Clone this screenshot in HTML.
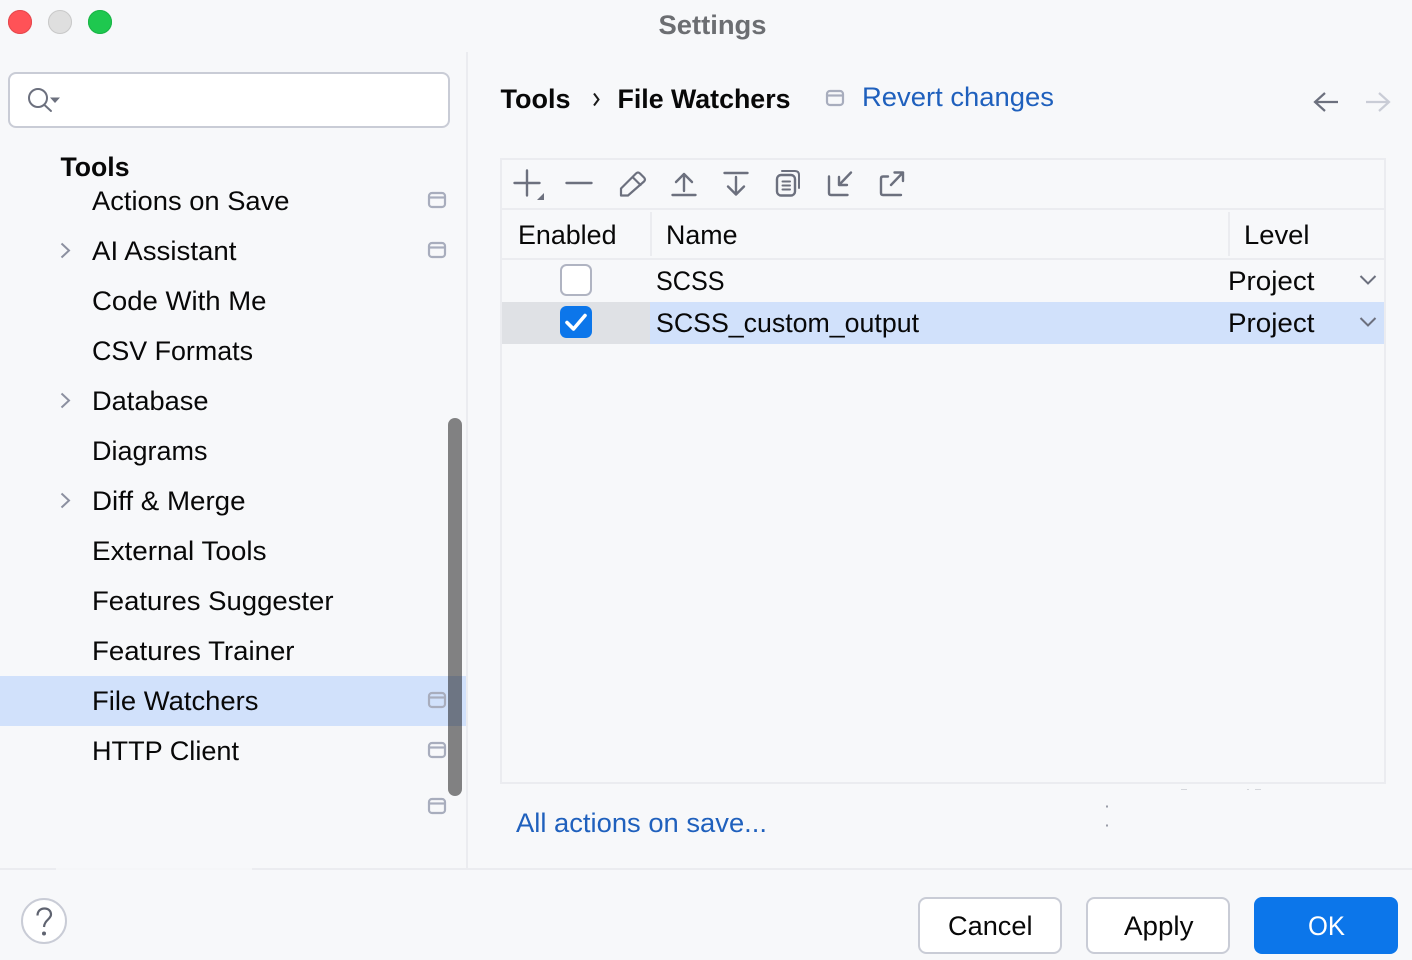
<!DOCTYPE html>
<html lang="en">
<head>
<meta charset="utf-8">
<title>Settings</title>
<style>
html,body{margin:0;padding:0;background:#f7f8fa;width:1412px;height:960px;overflow:hidden}
svg{display:block}
text{font-family:"Liberation Sans",sans-serif;font-size:27px;fill:#080808;letter-spacing:0}
.b{font-weight:700}
.l{fill:#1f60bd}
.ic{fill:none;stroke:#6c707e;stroke-width:2.4;stroke-linecap:round;stroke-linejoin:round}
.w{fill:none;stroke:#a8adbd;stroke-width:2.2}
</style>
</head>
<body>
<svg width="1412" height="960" viewBox="0 0 1412 960" xmlns="http://www.w3.org/2000/svg">
<defs>
<g id="win"><rect x="429" y="193" width="16" height="14" rx="3" class="w"/><path d="M429 197.500H445" class="w"/></g>
</defs>
<rect width="1412" height="960" fill="#f7f8fa"/>

<!-- traffic lights -->
<circle cx="20" cy="22" r="12" fill="#ff5257"/><circle cx="20" cy="22" r="11.500" fill="none" stroke="#e5484d" stroke-width="1"/>
<circle cx="60" cy="22" r="12" fill="#dfdfdf"/><circle cx="60" cy="22" r="11.500" fill="none" stroke="#c9c9c9" stroke-width="1"/>
<circle cx="100" cy="22" r="12" fill="#1ec84f"/><circle cx="100" cy="22" r="11.500" fill="none" stroke="#1ab446" stroke-width="1"/>
<text x="658.500" y="34" textLength="108" lengthAdjust="spacingAndGlyphs" class="b" style="fill:#6c6e72">Settings</text>

<!-- dividers -->
<rect x="466" y="52" width="2" height="816" fill="#ebecf0"/>
<rect x="0" y="868" width="1412" height="2" fill="#ebecf0"/>
<rect x="56" y="868" width="196" height="2" fill="#f5f6f8"/>

<!-- search -->
<rect x="9" y="73" width="440" height="54" rx="7" fill="#fff" stroke="#c9ccd6" stroke-width="2"/>
<circle cx="38" cy="98" r="9" class="ic" style="stroke-width:2"/>
<path d="M44.500 105L51 111" class="ic" style="stroke-width:2"/>
<path d="M50 97.500H60L55 103Z" fill="#6c707e"/>

<!-- sidebar -->
<rect x="0" y="676" width="466" height="50" fill="#d1e1fb"/>
<text x="60.500" y="176" textLength="69" lengthAdjust="spacingAndGlyphs" class="b">Tools</text>
<text x="92" y="210" textLength="197.500" lengthAdjust="spacingAndGlyphs">Actions on Save</text>
<text x="92" y="260" textLength="144.500" lengthAdjust="spacingAndGlyphs">AI Assistant</text>
<text x="92" y="310" textLength="174.500" lengthAdjust="spacingAndGlyphs">Code With Me</text>
<text x="92" y="360" textLength="161" lengthAdjust="spacingAndGlyphs">CSV Formats</text>
<text x="92" y="410" textLength="116.500" lengthAdjust="spacingAndGlyphs">Database</text>
<text x="92" y="460" textLength="115.500" lengthAdjust="spacingAndGlyphs">Diagrams</text>
<text x="92" y="510" textLength="153.500" lengthAdjust="spacingAndGlyphs">Diff &amp; Merge</text>
<text x="92" y="560" textLength="174.500" lengthAdjust="spacingAndGlyphs">External Tools</text>
<text x="92" y="610" textLength="241.500" lengthAdjust="spacingAndGlyphs">Features Suggester</text>
<text x="92" y="660" textLength="202.500" lengthAdjust="spacingAndGlyphs">Features Trainer</text>
<text x="92" y="710" textLength="166.500" lengthAdjust="spacingAndGlyphs">File Watchers</text>
<text x="92" y="760" textLength="147" lengthAdjust="spacingAndGlyphs">HTTP Client</text>
<path d="M61.500 243.500L69 250.500L61.500 257.500M61.500 393.500L69 400.500L61.500 407.500M61.500 493.500L69 500.500L61.500 507.500" fill="none" stroke="#8c90a0" stroke-width="2"/>
<use href="#win"/>
<use href="#win" y="50"/>
<use href="#win" y="500"/>
<use href="#win" y="550"/>
<use href="#win" y="606"/>
<rect x="448" y="418" width="14" height="378" rx="7" fill="#000" opacity=".48"/>

<!-- breadcrumb -->
<text x="500.500" y="108" textLength="70" lengthAdjust="spacingAndGlyphs" class="b">Tools</text>
<path d="M594 93.500L598.500 99.500L594 105.500" fill="none" stroke="#1a1a1a" stroke-width="2"/>
<text x="617.500" y="108" textLength="173" lengthAdjust="spacingAndGlyphs" class="b">File Watchers</text>
<g transform="translate(398 -102)"><use href="#win"/></g>
<text x="862" y="106" textLength="192" lengthAdjust="spacingAndGlyphs" class="l">Revert changes</text>
<path d="M1315 102H1338M1325 93L1315 102L1325 111" fill="none" stroke="#6c707e" stroke-width="2.200"/>
<path d="M1366 102H1389M1379 93L1389 102L1379 111" fill="none" stroke="#c9ccd6" stroke-width="2.200"/>

<!-- table frame -->
<rect x="501" y="159" width="884" height="624" fill="none" stroke="#ebecf0" stroke-width="2"/>
<rect x="502" y="208" width="882" height="2" fill="#ebecf0"/>
<rect x="502" y="258" width="882" height="2" fill="#ebecf0"/>
<rect x="650" y="212" width="2" height="44" fill="#ebecf0"/>
<rect x="1228" y="212" width="2" height="44" fill="#ebecf0"/>

<!-- toolbar icons -->
<path d="M527 170.500V195.500M514.500 183H539.500" class="ic"/>
<path d="M537 200H544V193Z" fill="#6c707e"/>
<path d="M566.500 183H591.500" class="ic"/>
<path d="M621 195.500V188.500L636 173.500Q638 171.500 640 173.500L644 177.500Q646 179.500 644 181.500L628 195.500ZM632.500 177L640.500 185" class="ic" style="stroke-width:2.200"/>
<path d="M672.500 195H695.500M684 191V174M676 182L684 174L692 182" class="ic"/>
<path d="M724.500 173H747.500M736 177V194.500M728 186.500L736 194.500L744 186.500" class="ic"/>
<rect x="777" y="175" width="18" height="20.500" rx="4" class="ic"/>
<path d="M782 171H795Q799 171 799 175V188M782.500 181.500H790M782.500 185.500H790M782.500 189.500H790" class="ic" style="stroke-width:2"/>
<path d="M829 176.500V193Q829 195 831 195H847.500M851 172.500L839 185M839 177V185H847" class="ic"/>
<path d="M888 176.500H883Q881 176.500 881 178.500V193Q881 195 883 195H901M891 185L903 172.500M894.500 172.500H903V181" class="ic"/>

<!-- header -->
<text x="518" y="244" textLength="98.500" lengthAdjust="spacingAndGlyphs">Enabled</text>
<text x="666" y="244" textLength="71.500" lengthAdjust="spacingAndGlyphs">Name</text>
<text x="1244" y="244" textLength="65.500" lengthAdjust="spacingAndGlyphs">Level</text>

<!-- rows -->
<rect x="502" y="302" width="148" height="42" fill="#dfe1e5"/>
<rect x="650" y="302" width="734" height="42" fill="#d1e1fb"/>
<rect x="561" y="265" width="30" height="30" rx="5.500" fill="#fff" stroke="#b0b4c2" stroke-width="2"/>
<rect x="560" y="306" width="32" height="32" rx="6.500" fill="#0c76ea"/>
<path d="M567 322.500L573.500 329L585 315.500" fill="none" stroke="#fff" stroke-width="3.600" stroke-linecap="round" stroke-linejoin="round"/>
<text x="656" y="290" textLength="68.500" lengthAdjust="spacingAndGlyphs">SCSS</text>
<text x="656" y="332" textLength="263" lengthAdjust="spacingAndGlyphs">SCSS_custom_output</text>
<text x="1228" y="290" textLength="86.500" lengthAdjust="spacingAndGlyphs">Project</text>
<text x="1228" y="332" textLength="86.500" lengthAdjust="spacingAndGlyphs">Project</text>
<path d="M1360.500 276L1368 283.500L1375.500 276M1360.500 318L1368 325.500L1375.500 318" fill="none" stroke="#6c707e" stroke-width="2"/>

<!-- bottom link and artifacts -->
<text x="516" y="832" textLength="251" lengthAdjust="spacingAndGlyphs" class="l">All actions on save...</text>
<rect x="1106" y="805.500" width="2" height="2" fill="#9a9da8"/>
<rect x="1106" y="824.500" width="2" height="2" fill="#9a9da8"/>
<path d="M1181 789.500H1187M1247 789.500H1249M1255 789.500H1261" stroke="#d5d7dc" stroke-width="1"/>

<!-- help -->
<circle cx="44" cy="921" r="22" fill="#fff" stroke="#c9ccd6" stroke-width="2"/>
<path d="M37.500 915.500C37.500 911 40.500 908.500 44.500 908.500C48.500 908.500 51 911 51 914.500C51 919 44.500 920 44 927" fill="none" stroke="#5f6370" stroke-width="2.200"/>
<circle cx="44" cy="933.500" r="2" fill="#5f6370"/>

<!-- buttons -->
<rect x="919" y="898" width="142" height="55" rx="7.500" fill="#fff" stroke="#c9ccd6" stroke-width="2"/>
<text x="948" y="935" textLength="84.500" lengthAdjust="spacingAndGlyphs">Cancel</text>
<rect x="1087" y="898" width="142" height="55" rx="7.500" fill="#fff" stroke="#c9ccd6" stroke-width="2"/>
<text x="1124" y="935" textLength="69.500" lengthAdjust="spacingAndGlyphs">Apply</text>
<rect x="1254" y="897" width="144" height="57" rx="8" fill="#0c76ea"/>
<text x="1308" y="935" textLength="37" lengthAdjust="spacingAndGlyphs" style="fill:#fff">OK</text>
</svg>
</body>
</html>
